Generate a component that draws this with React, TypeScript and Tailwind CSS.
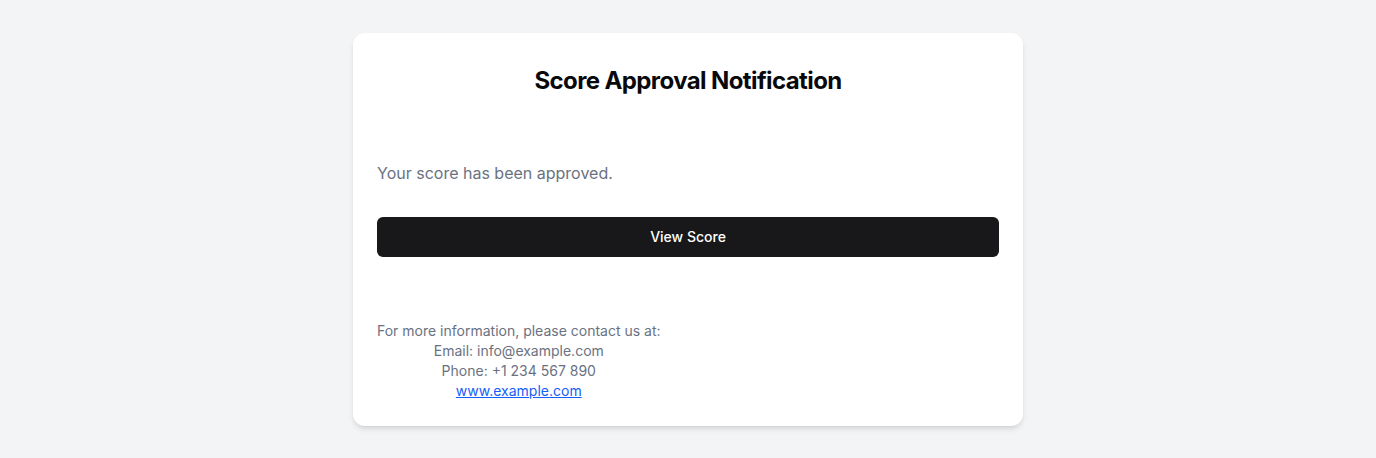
export default function App() {
  return (
    <div className="min-h-screen bg-[#f3f4f6] pt-[33px] font-['Inter',sans-serif]">
      <div className="mx-auto w-[670px] rounded-xl bg-white px-6 pt-8 pb-6 shadow-md">
        <h1 className="text-center text-2xl font-bold tracking-tight text-[#09090b]">Score Approval Notification</h1>

        <p className="mt-16 text-base text-gray-500">Your score has been approved.</p>

        <button className="mt-8 h-10 w-full rounded-md bg-[#18181b] text-sm font-medium text-white">
          View Score
        </button>

        <div className="mt-16 inline-block text-center text-sm text-gray-500">
          For more information, please contact us at:
          <br />
          Email: info@example.com
          <br />
          Phone: +1 234 567 890
          <br />
          <a href="#" className="text-blue-600 underline">
            www.example.com
          </a>
        </div>
      </div>
    </div>
  );
}
